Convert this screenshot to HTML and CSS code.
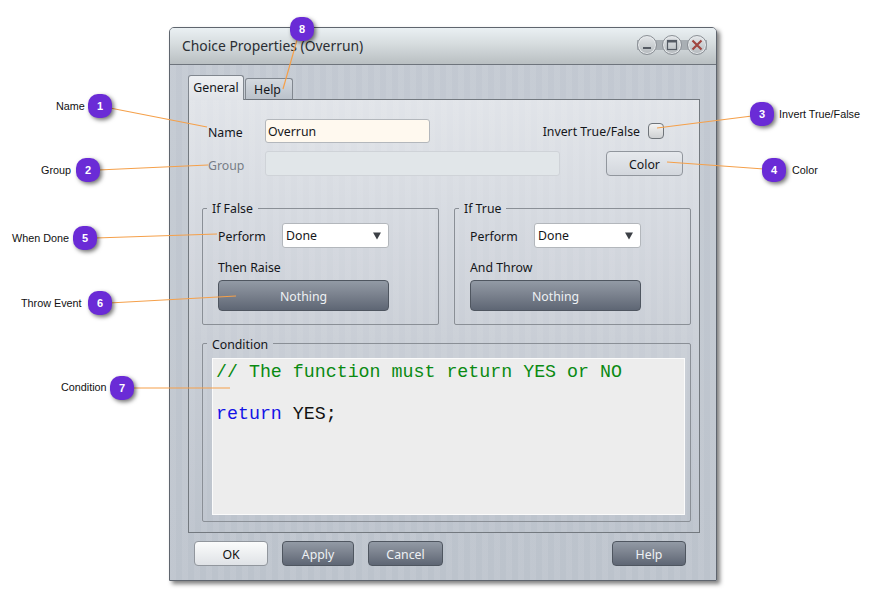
FILE: index.html
```html
<!DOCTYPE html>
<html lang="en">
<head>
<meta charset="utf-8">
<title>Choice Properties</title>
<link rel="stylesheet" href="styles.css">
</head>
<body>
<div class="window">
  <header class="titlebar">
    <span class="title">Choice Properties (Overrun)</span>
    <div class="controls">
      <span class="ctl"><svg viewBox="0 0 20 20" width="20" height="20"><path d="M6 13h8" stroke="#555b64" stroke-width="2"/></svg></span>
      <span class="ctl"><svg viewBox="0 0 20 20" width="20" height="20"><rect x="5.5" y="5.5" width="9" height="9" fill="none" stroke="#555b64" stroke-width="1.2"/><path d="M5.5 6.5h9" stroke="#555b64" stroke-width="2"/></svg></span>
      <span class="ctl"><svg viewBox="0 0 20 20" width="20" height="20"><path d="M5.5 5.5l9 9M14.500 5.500l-9 9" stroke="#a0453f" stroke-width="2.200"/></svg></span>
    </div>
  </header>
  <div class="content">
    <div class="tabs">
      <span class="tab active">General</span>
      <span class="tab help-tab">Help</span>
    </div>
    <section class="panel">
      <div class="row row-name">
        <label class="lbl">Name</label>
        <span class="input name-input">Overrun</span>
        <span class="invert"><span>Invert True/False</span><span class="check"></span></span>
      </div>
      <div class="row row-group">
        <label class="lbl muted">Group</label>
        <span class="input group-input"></span>
        <span class="btn light color-btn"><span class="btn-text">Color</span></span>
      </div>
      <div class="pair">
        <fieldset class="group">
          <legend>If False</legend>
          <div class="perform"><span class="perform-lbl">Perform</span><span class="select">Done<svg class="arrow" viewBox="0 0 10 9" width="8" height="8"><path d="M0 0h10L5 9z" fill="#3c4046"/></svg></span></div>
          <div class="caption">Then Raise</div>
          <span class="btn dark wide"><span class="btn-text">Nothing</span></span>
        </fieldset>
        <fieldset class="group">
          <legend>If True</legend>
          <div class="perform"><span class="perform-lbl">Perform</span><span class="select">Done<svg class="arrow" viewBox="0 0 10 9" width="8" height="8"><path d="M0 0h10L5 9z" fill="#3c4046"/></svg></span></div>
          <div class="caption">And Throw</div>
          <span class="btn dark wide"><span class="btn-text">Nothing</span></span>
        </fieldset>
      </div>
      <fieldset class="group condition">
        <legend>Condition</legend>
        <pre class="editor"><span class="cm">// The function must return YES or NO</span>

<span class="kw">return</span> YES;</pre>
      </fieldset>
    </section>
    <footer class="footer">
      <span class="btn light ok"><span class="btn-text">OK</span></span>
      <span class="btn dark apply"><span class="btn-text">Apply</span></span>
      <span class="btn dark cancel"><span class="btn-text">Cancel</span></span>
      <span class="btn dark help"><span class="btn-text">Help</span></span>
    </footer>
  </div>
</div>

<svg class="lines" width="876" height="591" viewBox="0 0 876 591">
  <g stroke="#f5a04a" stroke-width="1.200" fill="none">
    <path d="M110 108L207 127"/>
    <path d="M98 170L208 165"/>
    <path d="M752 116L657 128"/>
    <path d="M764 169L667 162"/>
    <path d="M95 238L217 234"/>
    <path d="M109 303L236 296"/>
    <path d="M132 388L230 388"/>
    <path d="M297 40L283 89"/>
  </g>
</svg>

<span class="note n1">Name</span>
<span class="note n2">Group</span>
<span class="note n3">Invert True/False</span>
<span class="note n4">Color</span>
<span class="note n5">When Done</span>
<span class="note n6">Throw Event</span>
<span class="note n7">Condition</span>

<span class="badge b1">1</span>
<span class="badge b2">2</span>
<span class="badge b3">3</span>
<span class="badge b4">4</span>
<span class="badge b5">5</span>
<span class="badge b6">6</span>
<span class="badge b7">7</span>
<span class="badge b8">8</span>
</body>
</html>
```
FILE: styles.css
```css
* { box-sizing: border-box; }
html, body { margin: 0; height: 100%; }
body {
  position: relative;
  width: 876px;
  height: 591px;
  overflow: hidden;
  background: #fff;
  font-family: "Noto Sans", "Open Sans", sans-serif;
  font-size: 12.3px;
  color: #14161a;
}

.window {
  position: absolute;
  left: 169px;
  top: 27px;
  width: 548px;
  height: 554px;
  border: 1px solid #5f656e;
  border-radius: 5px 5px 0 0;
  box-shadow: 3px 3px 4px rgba(0, 0, 0, .5);
  background:
    repeating-linear-gradient(90deg, rgba(255,255,255,.07) 0 6px, rgba(255,255,255,0) 6px 12px),
    linear-gradient(#c3c9d2, #bcc3cc);
  display: flex;
  flex-direction: column;
}

.titlebar {
  height: 37px;
  flex: none;
  border-bottom: 1px solid #6e747c;
  border-radius: 4px 4px 0 0;
  background: linear-gradient(#eaf0f3, #d6dcde 45%, #b9bfc2);
  display: flex;
  align-items: center;
  justify-content: space-between;
  padding: 0 9px 0 12px;
}
.title { font-size: 13.9px; color: #2a2e33; position: relative; top: -1px; }
.controls {
  display: flex;
  gap: 5px;
  background: linear-gradient(transparent 5px, #a9afb4 5px, #a9afb4 15px, transparent 15px);
  height: 20px;
  position: relative;
  top: -1px;
}
.ctl {
  width: 20px;
  height: 20px;
  border-radius: 50%;
  border: 1px solid #8b9096;
  background: linear-gradient(#e4e7ea, #b4b9bd);
  box-shadow: inset 0 0 0 1px #e8ebed;
  display: block;
  overflow: hidden;
}
.ctl svg { display: block; margin: -1px; }

.content { padding: 10px 16px 0 18px; flex: 1; display: flex; flex-direction: column; }

.tabs { display: flex; align-items: flex-end; height: 25px; flex: none; position: relative; z-index: 1; margin-bottom: -1px; }
.tab {
  height: 22px;
  width: 48px;
  margin-left: 1px;
  border: 1px solid #81878f;
  border-bottom: 1px solid #6e747c;
  border-radius: 3px 3px 0 0;
  background: linear-gradient(#d4d9df, #bbc2cb);
  text-align: center;
  line-height: 22px;
}
.help-tab { padding-right: 3px; }
.tab.active {
  width: 56px;
  height: 25px;
  margin-left: 0;
  border-bottom: 0;
  background: linear-gradient(#eef0f3, #e0e3e8);
  line-height: 23px;
}

.panel {
  height: 434px;
  flex: none;
  border: 1px solid #73797f;
  padding: 19px 8px 0 13px;
  background:
    repeating-linear-gradient(90deg, rgba(255,255,255,.06) 0 6px, rgba(255,255,255,0) 6px 12px),
    linear-gradient(#e1e4e9, #c9ced6 55%, #bcc3cc);
}

.row { display: flex; align-items: center; padding-left: 6px; }
.row-name { height: 24px; }
.row-group { height: 25px; margin-top: 8px; }
.lbl { width: 57px; flex: none; position: relative; top: 1px; }
.lbl.muted { color: #777d86; top: 2px; }

.input {
  display: block;
  height: 24px;
  border: 1px solid #b3b7bc;
  border-radius: 3px;
  line-height: 24px;
  padding: 0 2px;
}
.name-input { width: 165px; background: #fff9ef; }
.group-input { width: 295px; height: 25px; background: #e1e6e9; border-color: #cfd3d8; }

.invert { margin-left: auto; margin-right: 27px; display: flex; align-items: center; gap: 8px; }
.check {
  width: 16px;
  height: 16px;
  border: 1px solid #6f747a;
  border-radius: 4px;
  background: linear-gradient(#f3f3f3, #cfd1d3);
}

.btn {
  display: flex;
  align-items: center;
  justify-content: center;
  height: 25px;
  border-radius: 4px;
}
.btn-text { position: relative; top: 1px; }
.btn.light { border: 1px solid #91969d; background: linear-gradient(#e6e9ed, #d3d7dd); }
.btn.dark {
  border: 1px solid #4f5660;
  background: linear-gradient(#929aa5, #7c838f 45%, #5e6674);
  color: #eef1f4;
}
.color-btn { width: 77px; margin-left: 46px; }

.pair { display: flex; gap: 15px; margin-top: 24px; }
.group {
  margin: 0;
  min-width: 0;
  border: 1px solid #8a8f96;
  border-radius: 2px;
  padding: 7px 0 13px 15px;
  width: 237px;
}
.group legend { padding: 1px 5px 0; margin-left: -11px; line-height: 15px; height: 16px; }

.perform { display: flex; align-items: center; height: 25px; }
.perform-lbl { width: 64px; flex: none; position: relative; top: 1px; }
.select {
  width: 107px;
  height: 25px;
  border: 1px solid #b3b7bc;
  border-radius: 3px;
  background: #fff;
  padding: 0 3px;
  line-height: 22px;
  display: flex;
  align-items: center;
  justify-content: space-between;
}
.arrow { margin-right: 4px; }
.caption { height: 32px; line-height: 40px; }
.wide { width: 171px; height: 31px; }

.condition { width: 489px; margin-top: 10px; padding: 7px 5px 6px 9px; }
.condition legend { margin-left: -5px; padding-top: 2px; }
.editor {
  margin: 0;
  height: 157px;
  padding: 3px 3px;
  background: #ededed;
  border: 1px solid #fbfbfb;
  font-family: "Liberation Mono", monospace;
  font-size: 18.3px;
  line-height: 21px;
  color: #111;
}
.cm { color: #0a8a12; }
.kw { color: #1414e6; }

.footer { display: flex; margin: 8px 0 0 6px; }
.footer .btn { height: 25px; }
.ok { width: 74px; background: linear-gradient(#fbfcfc, #dfe2e6) !important; color: #111; }
.apply { width: 72px; margin-left: 14px; }
.cancel { width: 75px; margin-left: 14px; }
.help { width: 74px; margin-left: 169px; }

.lines { position: absolute; left: 0; top: 0; pointer-events: none; z-index: 2; }

.note {
  position: absolute;
  font-family: "Liberation Sans", Arial, sans-serif;
  font-size: 10.8px;
  line-height: 14px;
  color: #111;
  white-space: nowrap;
}
.n1 { left: 56px; top: 99px; }
.n2 { left: 41px; top: 163px; }
.n3 { left: 779px; top: 107px; }
.n4 { left: 792px; top: 163px; }
.n5 { left: 12px; top: 231px; }
.n6 { left: 21px; top: 296px; }
.n7 { left: 61px; top: 380px; }

.badge {
  position: absolute;
  z-index: 3;
  width: 24px;
  height: 24px;
  border-radius: 10px;
  background: #6a2bd6;
  color: #fff;
  font-family: "Liberation Sans", Arial, sans-serif;
  font-weight: 700;
  font-size: 11px;
  line-height: 24px;
  text-align: center;
  box-shadow: 2px 2px 4px rgba(0, 0, 0, .55);
}
.b1 { left: 88px; top: 94px; }
.b2 { left: 76px; top: 158px; }
.b3 { left: 750px; top: 102px; }
.b4 { left: 762px; top: 158px; }
.b5 { left: 73px; top: 226px; }
.b6 { left: 88px; top: 291px; }
.b7 { left: 110px; top: 376px; }
.b8 { left: 290px; top: 17px; }
```
